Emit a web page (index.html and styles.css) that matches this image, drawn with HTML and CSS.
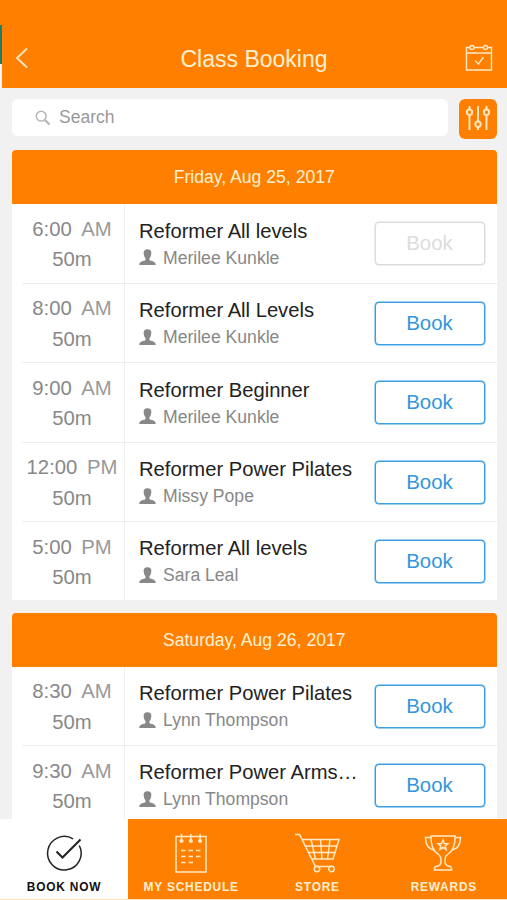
FILE: index.html
```html
<!DOCTYPE html>
<html lang="en">
<head>
	<meta charset="utf-8">
	<title>Class Booking</title>
	<link rel="stylesheet" href="styles.css">
</head>
<body>
	<!-- Shared icon -->
	<svg class="defs">
		<symbol id="person" viewBox="0 0 17 17">
			<path d="M8.500 0.300C11.300 0.300 12.500 1.900 12.300 4.300C12.200 6.500 11.500 8.300 10.500 9.300V11C11.500 12.200 16.500 11.800 16.800 15.900H0.200C0.500 11.800 5.500 12.200 6.500 11V9.300C5.500 8.300 4.800 6.500 4.700 4.300C4.500 1.900 5.700 0.300 8.500 0.300Z"/>
		</symbol>
	</svg>
	<div class="app">
		<div class="edge"></div>
		<div class="header">
			<svg class="back" viewBox="0 0 14 22"><path d="M12 1.500L2 11L12 20.500"/></svg>
			<h1>Class Booking</h1>
			<svg class="calendar" viewBox="0 0 28 28">
				<path d="M5 3.500H1.500V26H26.500V3.500H22.500M9 3.500H18.500M1.500 9H26.500M10 16.500L13.500 20L18.500 13"/>
				<circle cx="7" cy="3.500" r="2"/>
				<circle cx="20.500" cy="3.500" r="2"/>
			</svg>
		</div>

		<div class="search-row">
			<div class="search">
				<svg viewBox="0 0 16 16"><circle cx="6.200" cy="6.200" r="4.900"/><path class="handle" d="M10 10L14.500 14.500"/></svg>
				<span>Search</span>
			</div>
			<div class="filter">
				<svg viewBox="0 0 26 26">
					<path d="M4.500 1V4.500M4.500 10V25M13 1V16.500M13 22V25M21.500 1V4.500M21.500 10V25"/>
					<circle cx="4.500" cy="7.200" r="2.700"/>
					<circle cx="13" cy="19.200" r="2.700"/>
					<circle cx="21.500" cy="7.200" r="2.700"/>
				</svg>
			</div>
		</div>

		<div class="day">
			<div class="day-header">Friday, Aug 25, 2017</div>
			<div class="row">
				<div class="time"><div>6:00 <span>AM</span></div><div>50m</div></div>
				<div class="info"><h2>Reformer All levels</h2><p><svg><use href="#person"/></svg>Merilee Kunkle</p></div>
				<button class="book disabled">Book</button>
			</div>
			<div class="row">
				<div class="time"><div>8:00 <span>AM</span></div><div>50m</div></div>
				<div class="info"><h2>Reformer All Levels</h2><p><svg><use href="#person"/></svg>Merilee Kunkle</p></div>
				<button class="book">Book</button>
			</div>
			<div class="row">
				<div class="time"><div>9:00 <span>AM</span></div><div>50m</div></div>
				<div class="info"><h2>Reformer Beginner</h2><p><svg><use href="#person"/></svg>Merilee Kunkle</p></div>
				<button class="book">Book</button>
			</div>
			<div class="row">
				<div class="time"><div>12:00 <span>PM</span></div><div>50m</div></div>
				<div class="info"><h2>Reformer Power Pilates</h2><p><svg><use href="#person"/></svg>Missy Pope</p></div>
				<button class="book">Book</button>
			</div>
			<div class="row">
				<div class="time"><div>5:00 <span>PM</span></div><div>50m</div></div>
				<div class="info"><h2>Reformer All levels</h2><p><svg><use href="#person"/></svg>Sara Leal</p></div>
				<button class="book">Book</button>
			</div>
		</div>

		<div class="day">
			<div class="day-header">Saturday, Aug 26, 2017</div>
			<div class="row">
				<div class="time"><div>8:30 <span>AM</span></div><div>50m</div></div>
				<div class="info"><h2>Reformer Power Pilates</h2><p><svg><use href="#person"/></svg>Lynn Thompson</p></div>
				<button class="book">Book</button>
			</div>
			<div class="row">
				<div class="time"><div>9:30 <span>AM</span></div><div>50m</div></div>
				<div class="info"><h2>Reformer Power Arms…</h2><p><svg><use href="#person"/></svg>Lynn Thompson</p></div>
				<button class="book">Book</button>
			</div>
		</div>

		<div class="tabs">
			<div class="tab active">
				<svg viewBox="0 0 46 40">
					<path d="M32 5.800A16.800 16.800 0 1 0 38.300 12.500"/>
					<path class="thick" d="M15.500 18.500L21.500 24.500L39.500 6.500"/>
				</svg>
				<span>BOOK NOW</span>
			</div>
			<div class="tab">
				<svg viewBox="0 0 46 40">
					<path d="M8 3.500H38V39H8Z"/>
					<path d="M13.500 1V8M22.800 1V8M32 1V8"/>
					<path d="M13 17.500H17.500M20.500 17.500H25M28 17.500H32.500M13 23.500H17.500M20.500 23.500H25M28 23.500H32.500M13 29.500H17.500M20.500 29.500H25"/>
					<g class="dots"><circle cx="13.500" cy="8" r="2.100"/><circle cx="22.800" cy="8" r="2.100"/><circle cx="32" cy="8" r="2.100"/></g>
				</svg>
				<span>MY SCHEDULE</span>
			</div>
			<div class="tab">
				<svg viewBox="0 0 46 40">
					<path d="M1 1.500H5.500L21.500 33.500H38M8.500 6.500H45L39 26H18M11.500 13H43M14.500 19.500H41M17 6.500L21.500 26M26.500 6.500L28 26M36 6.500L33.500 26"/>
					<circle cx="23" cy="36" r="2.700"/>
					<circle cx="37.500" cy="36" r="2.700"/>
				</svg>
				<span>STORE</span>
			</div>
			<div class="tab">
				<svg viewBox="0 0 46 40">
					<path d="M11 3H35C35.500 13 32 18.500 27.500 21.500C25 23.200 24.800 25 25 29C25 32 27 33 30 33.500Q32 34.300 31.500 37H14.500Q14 34.300 16 33.500C19 33 21 32 21 29C21.200 25 21 23.200 18.500 21.500C14 18.500 10.500 13 11 3Z"/>
					<path d="M11 4.500H5.500C5.500 11.500 8.500 16 14.500 17.500M35 4.500H40.500C40.500 11.500 37.500 16 31.500 17.500"/>
					<path d="M23 7L24.400 10.500L28 10.700L25.200 13L26.200 16.500L23 14.500L19.800 16.500L20.800 13L18 10.700L21.600 10.500Z"/>
				</svg>
				<span>REWARDS</span>
			</div>
		</div>
	</div>
</body>
</html>
```

FILE: styles.css
```css
body {
	margin: 0;
	background: #fff;
	font-family: "Liberation Sans", Arial, sans-serif;
}
h1, h2, p {
	margin: 0;
	font-weight: normal;
}
svg {
	display: block;
	fill: none;
	stroke: #ffe9c4;
	stroke-width: 1.5;
}
.defs {
	position: absolute;
	width: 0;
	height: 0;
}
.app {
	position: relative;
	height: 900px;
	overflow: hidden;
	background: #f1f1f2;
}

/* strip showing along the left side of the header */
.edge {
	position: absolute;
	left: 0;
	top: 25px;
	width: 2px;
	height: 63px;
	background: linear-gradient(#1c7d68 39px, #f4f4f4 39px);
}
.header {
	box-sizing: border-box;
	height: 88px;
	padding: 28px 14px 0 15px;
	display: flex;
	justify-content: space-between;
	align-items: center;
	background: #ff8000;
}
.back {
	width: 14px;
	height: 22px;
	margin-right: 14px;
	stroke-width: 1.8;
}
.header h1 {
	color: #fff0d2;
	font-size: 23px;
	line-height: 28px;
	padding-top: 2px;
}
.calendar {
	width: 28px;
	height: 28px;
	stroke-width: 1.4;
}

.search-row {
	display: flex;
	justify-content: space-between;
	padding: 11px 10.5px 11.4px 12px;
}
.search {
	box-sizing: border-box;
	width: 436px;
	height: 37px;
	padding-left: 23px;
	display: flex;
	align-items: center;
	gap: 8px;
	background: #fff;
	border-radius: 6px;
	color: #999;
	font-size: 17.5px;
}
.search svg {
	width: 16px;
	height: 16px;
	stroke: #b5b5b5;
}
.search .handle {
	stroke-width: 2.2;
}
.filter {
	width: 38px;
	height: 40px;
	display: flex;
	align-items: center;
	justify-content: center;
	background: #ff8000;
	border-radius: 6px;
}
.filter svg {
	width: 26px;
	height: 26px;
	margin-bottom: 2px;
	stroke-width: 1.9;
}

.day {
	margin: 0 10.5px 12.6px 12px;
	background: #fff;
	border-radius: 4px 4px 0 0;
	overflow: hidden;
}
.day-header {
	height: 54px;
	background: #ff8000;
	color: #fff0d2;
	font-size: 17.6px;
	line-height: 55px;
	text-align: center;
}
.row {
	box-sizing: border-box;
	height: 79.5px;
	margin-left: 10px;
	padding-right: 12px;
	display: flex;
	align-items: center;
	border-bottom: 1px solid #ebeeee;
}
.row:last-child {
	height: 78px;
	border-bottom: none;
}
.time {
	box-sizing: border-box;
	width: 103px;
	height: 100%;
	padding: 9.5px 2px 0 0;
	border-right: 1px solid #eef0f0;
	text-align: center;
	color: #888;
	font-size: 20.3px;
	line-height: 30.5px;
	white-space: nowrap;
}
.time span {
	margin-left: 4px;
	color: #999;
}
.info {
	flex: 1;
	padding-left: 14px;
	white-space: nowrap;
}
.info h2 {
	color: #222;
	font-size: 20.2px;
	line-height: 28px;
}
.info p {
	display: flex;
	align-items: center;
	color: #888;
	font-size: 17.6px;
	line-height: 26px;
}
.info svg {
	width: 17px;
	height: 17px;
	margin-right: 7px;
	fill: #888;
	stroke: none;
}
.book {
	width: 110px;
	height: 43px;
	padding: 0;
	background: #fff;
	border: 1px solid #3d9fe3;
	box-shadow: 0 0 0 0.5px #3d9fe3;
	border-radius: 4px;
	color: #3296dc;
	font-family: inherit;
	font-size: 20.4px;
}
.disabled {
	border-color: #dcdcdc;
	box-shadow: 0 0 0 0.5px #dcdcdc;
	color: #dcdcdc;
}

/* bottom navigation */
.tabs {
	position: absolute;
	left: 0;
	right: 0;
	top: 819px;
	height: 80px;
	display: flex;
	background: #ff8000;
	border-bottom: 1px solid #ffe0b8;
}
.tab {
	flex: 1;
	display: flex;
	flex-direction: column;
	align-items: center;
	color: #fff0d2;
	font-size: 11.9px;
	font-weight: bold;
	letter-spacing: 0.8px;
}
.tab svg {
	width: 46px;
	height: 40px;
	margin: 14px 1px 7px 0;
	stroke-width: 1.5;
}
.tab .dots {
	fill: #ffe9c4;
	stroke: none;
}
.active {
	flex: 0 0 128px;
	background: #fff;
	color: #111;
}
.active svg {
	stroke: #222;
}
.active .thick {
	stroke-width: 2;
}
```
